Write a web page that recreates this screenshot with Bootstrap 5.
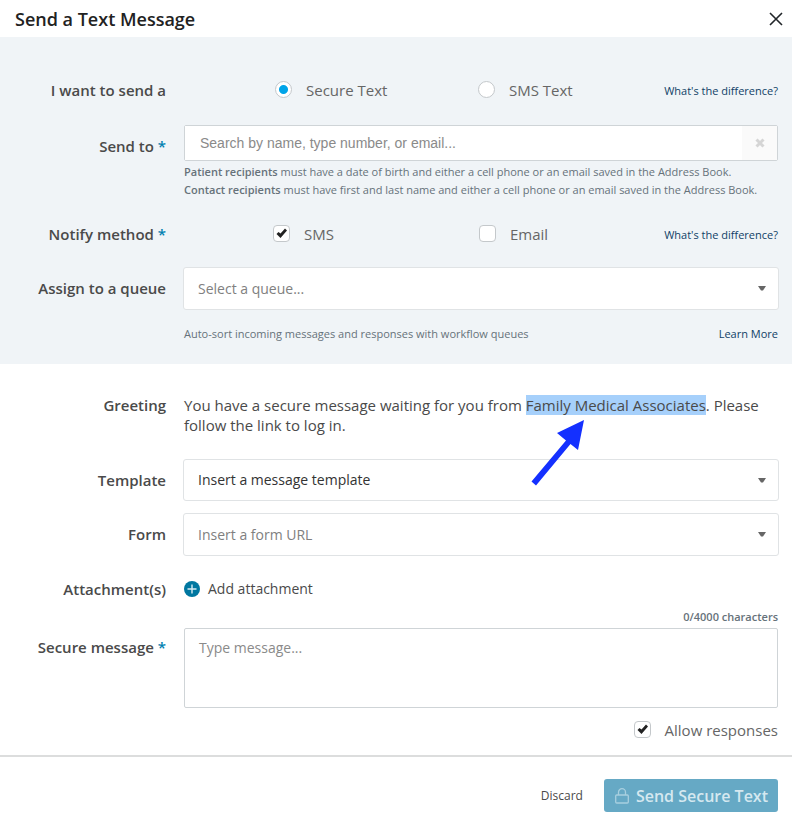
<!DOCTYPE html>
<html lang="en">
<head>
<meta charset="utf-8">
<meta name="viewport" content="width=device-width, initial-scale=1">
<title>Send a Text Message</title>
<link href="https://cdn.jsdelivr.net/npm/bootstrap@5.3.0/dist/css/bootstrap.min.css" rel="stylesheet">
<style>
  body { font-family: "Open Sans", "Noto Sans", sans-serif; font-size: 15px; line-height: 20px; color: #4a4a4a; }
  .dialog-head { padding: 8px 8px 7px 15px; }
  .dialog-title { font-size: 18px; line-height: 22px; font-weight: 600; color: #222; }
  .close-x { width: 16px; height: 16px; }
  .recipients { background: #f0f4f7; padding: 43px 14px 21px 0; gap: 25px; }
  .message { padding: 31px 14px 15px 0; }
  .line { display: grid; grid-template-columns: 166px minmax(0, 1fr); column-gap: 18px; }
  .line-label { font-size: 15px; font-weight: 600; text-align: right; margin: 0; }
  .drop { padding-top: 11px; }
  .req { color: #0080b0; }
  .choices { display: grid; grid-template-columns: 203px 1fr auto; padding-left: 91px; }
  .choices.checks { grid-template-columns: 206px 1fr auto; padding-left: 89px; }
  .choice { display: flex; align-items: center; gap: 14px; color: #666; }
  .tick { appearance: none; flex: none; width: 17px; height: 17px; margin: 0 0 2px; border: 1px solid #c4c8cb; background: #fff center / 15px 15px no-repeat; border-radius: 4px; }
  .tick[type=radio] { border-radius: 50%; }
  .tick[type=radio]:checked { background-image: radial-gradient(circle, #00a4e8 4px, transparent 5px); }
  .tick[type=checkbox]:checked { background-image: url("data:image/svg+xml,%3Csvg xmlns='http://www.w3.org/2000/svg' viewBox='0 0 15 15'%3E%3Cpath d='M2.500 8l2-2 2 1.500L11 2.500l2 2-6.500 7.500z' fill='%23222'/%3E%3C/svg%3E"); }
  .tiny { font-size: 11px; line-height: 18px; color: #66727a; }
  .tiny b { font-weight: 600; }
  .tiny-link { font-size: 11px; line-height: 18px; color: #0f3f66; align-self: end; }
  .under-search { margin-top: 2px; }
  .under-queue { margin-top: 15px; }
  .queue-line { margin-top: -2px; }
  .search { border: 1px solid #cfd4d7; border-radius: 2px; background: #fff; height: 36px; }
  .search input { font: 14px/20px "Liberation Sans", Arial, sans-serif; padding: 0 15px; border: 0; outline: 0; color: #444; min-width: 0; }
  .search input::placeholder, .area::placeholder { color: #8a8a8a; opacity: 1; }
  .search button { width: 35px; border: 0; background: #fafafa; color: #d5d5d5; }
  .picker { display: block; appearance: none; height: 43px; margin: 0 -1px; width: calc(100% + 2px); font-size: 14px; color: #808080; padding: 0 14px; border: 1px solid #e0e3e5; border-radius: 3px; background: #fff url("data:image/svg+xml,%3Csvg xmlns='http://www.w3.org/2000/svg' viewBox='0 0 8 5'%3E%3Cpath d='M0 0h8L5 4.500H3z' fill='%23666'/%3E%3C/svg%3E") right 12px center / 8px 5px no-repeat; }
  .picker.filled { height: 42px; color: #333; }
  .template-line { margin: 24px 0 12px; }
  .attach-line { margin: 23px 0 9px; }
  .picked { background: #a6d0fb; }
  .pointer { left: 0; top: 100%; width: 64px; height: 76px; z-index: 2; pointer-events: none; }
  .flat { border: 0; background: none; padding: 0; color: inherit; }
  .add { font-size: 14px; gap: 8px; }
  .area { height: 80px; padding: 9px 14px; margin-top: 2px; border: 1px solid #cfd4d7; border-radius: 2px; font-size: 14px; line-height: 20px; resize: none; display: block; }
  .allow { margin-top: 12px; }
  .dialog-foot { border-top: 2px solid #dcdddd; padding: 22px 14px 10px; gap: 21px; }
  .discard { font-size: 12px; }
  .send { height: 33px; padding: 0 10px 0 11px; gap: 7px; border: 0; border-radius: 3px; background: #66a9c5; color: #d5e8f0; font-size: 16px; font-weight: 600; }
</style>
<script src="https://cdn.jsdelivr.net/npm/bootstrap@5.3.0/dist/js/bootstrap.bundle.min.js"></script>
</head>
<body>
<form>
  <header class="dialog-head d-flex justify-content-between align-items-center">
    <h1 class="dialog-title m-0">Send a Text Message</h1>
    <button type="button" class="flat d-flex text-dark" aria-label="Close"><svg class="close-x" viewBox="0 0 16 16"><path d="M2 2l12 12M14 2L2 14" fill="none" stroke="currentColor" stroke-width="1.600"/></svg></button>
  </header>

  <section class="recipients d-flex flex-column">
    <div class="line">
      <div class="line-label" id="kind">I want to send a</div>
      <div class="choices" role="radiogroup" aria-labelledby="kind">
        <label class="choice"><input class="tick" type="radio" name="kind" checked>Secure Text</label>
        <label class="choice"><input class="tick" type="radio" name="kind">SMS Text</label>
        <a class="tiny-link text-decoration-none" href="#">What's the difference?</a>
      </div>
    </div>

    <div class="line">
      <label class="line-label drop" for="to">Send to <span class="req">*</span></label>
      <div>
        <div class="search d-flex">
          <input id="to" class="flex-grow-1" type="text" placeholder="Search by name, type number, or email...">
          <button type="button" class="d-flex align-items-center justify-content-center p-0" aria-label="Clear"><svg width="10" height="10" viewBox="0 0 10 10"><path d="M1.500 1.500l7 7M8.500 1.500l-7 7" stroke="currentColor" stroke-width="3"/></svg></button>
        </div>
        <div class="tiny under-search">
          <div><b>Patient recipients</b> must have a date of birth and either a cell phone or an email saved in the Address Book.</div>
          <div><b>Contact recipients</b> must have first and last name and either a cell phone or an email saved in the Address Book.</div>
        </div>
      </div>
    </div>

    <div class="line">
      <div class="line-label" id="notify">Notify method <span class="req">*</span></div>
      <div class="choices checks" role="group" aria-labelledby="notify">
        <label class="choice"><input class="tick" type="checkbox" checked>SMS</label>
        <label class="choice"><input class="tick" type="checkbox">Email</label>
        <a class="tiny-link text-decoration-none" href="#">What's the difference?</a>
      </div>
    </div>

    <div class="line queue-line">
      <label class="line-label drop" for="queue">Assign to a queue</label>
      <div>
        <select id="queue" class="picker"><option>Select a queue...</option></select>
        <div class="tiny under-queue d-flex justify-content-between">
          <span>Auto-sort incoming messages and responses with workflow queues</span>
          <a class="tiny-link text-decoration-none" href="#">Learn More</a>
        </div>
      </div>
    </div>
  </section>

  <section class="message">
    <div class="line">
      <div class="line-label">Greeting</div>
      <p class="m-0">You have a secure message waiting for you from <span class="picked position-relative">Family Medical Associates<svg class="pointer position-absolute" viewBox="0 0 64 76" aria-hidden="true"><path d="M58 5L52 35 44.500 29 10 70.500 5.500 66.500 40 25.500 31 18z" fill="#1430ff"/></svg></span>. Please follow the link to log in.</p>
    </div>
    <div class="line template-line">
      <label class="line-label drop" for="template">Template</label>
      <div><select id="template" class="picker filled"><option>Insert a message template</option></select></div>
    </div>
    <div class="line">
      <label class="line-label drop" for="formurl">Form</label>
      <div><select id="formurl" class="picker"><option>Insert a form URL</option></select></div>
    </div>
    <div class="line attach-line">
      <div class="line-label">Attachment(s)</div>
      <div class="d-flex">
        <button type="button" class="flat add d-flex align-items-center"><svg width="16" height="16" viewBox="0 0 16 16"><circle cx="8" cy="8" r="8" fill="#0077a0"/><path d="M8 3.500v9M3.500 8h9" stroke="#d8ebf2" stroke-width="1.400"/></svg>Add attachment</button>
      </div>
    </div>
    <div class="tiny text-end"><b>0/4000 characters</b></div>
    <div class="line">
      <label class="line-label drop" for="body">Secure message <span class="req">*</span></label>
      <textarea id="body" class="area w-100" placeholder="Type message..."></textarea>
    </div>
    <div class="allow d-flex justify-content-end">
      <label class="choice"><input class="tick" type="checkbox" checked>Allow responses</label>
    </div>
  </section>

  <footer class="dialog-foot d-flex justify-content-end align-items-center">
    <button type="button" class="flat discard">Discard</button>
    <button type="submit" class="send d-flex align-items-center"><svg width="14" height="16" viewBox="0 0 14 16" fill="none" stroke="#a8cfdf" stroke-width="1.300"><rect x="0.700" y="7" width="12.600" height="8" rx="1"/><path d="M3.500 7V4.200a3.500 3.500 0 0 1 7 0V7"/></svg>Send Secure Text</button>
  </footer>
</form>
</body>
</html>
